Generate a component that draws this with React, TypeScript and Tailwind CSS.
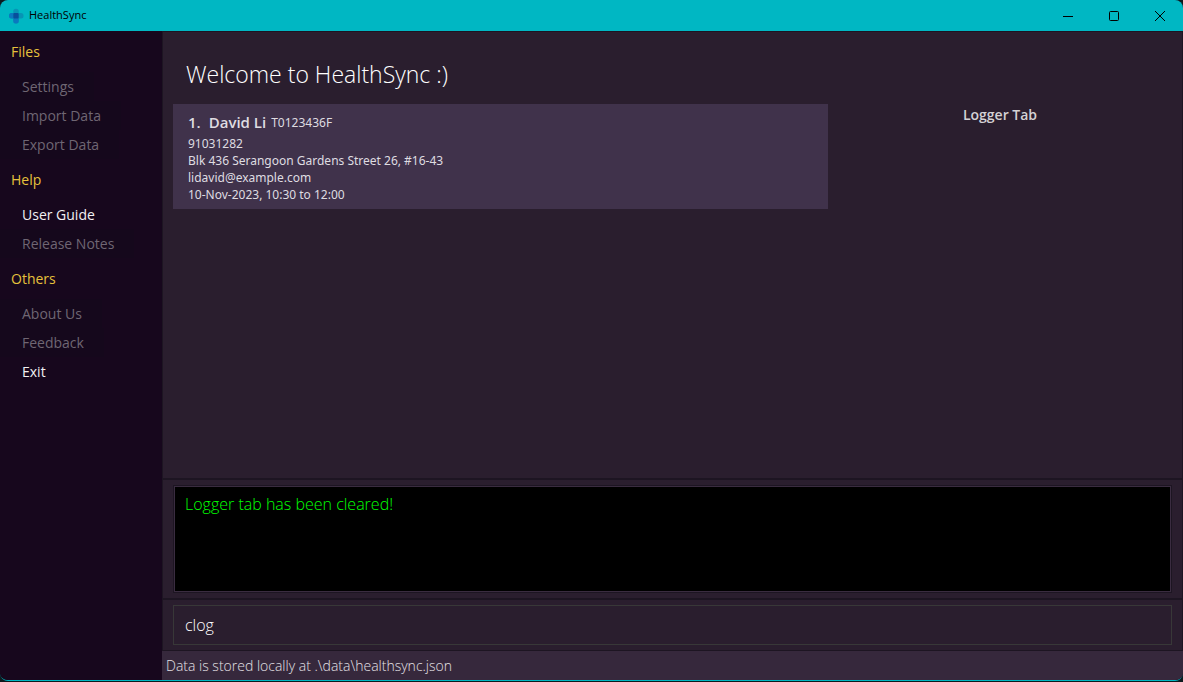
import { useState } from "react";

type MenuItem = { label: string; enabled?: boolean };
type MenuSection = { title: string; items: MenuItem[] };

const sections: MenuSection[] = [
  {
    title: "Files",
    items: [{ label: "Settings" }, { label: "Import Data" }, { label: "Export Data" }],
  },
  {
    title: "Help",
    items: [{ label: "User Guide", enabled: true }, { label: "Release Notes" }],
  },
  {
    title: "Others",
    items: [{ label: "About Us" }, { label: "Feedback" }, { label: "Exit", enabled: true }],
  },
];

function Logo() {
  return (
    <svg width="16" height="16" viewBox="0 0 16 16" aria-hidden="true">
      <rect x="1" y="5" width="14.5" height="5.5" rx="2.5" fill="#0794b5" />
      <rect x="5.3" y="0.7" width="5.4" height="14.8" rx="2.5" fill="#0794b5" />
      <path d="M3.5 5h2v5.5h-2A2.5 2.5 0 0 1 1 8V7.5A2.5 2.5 0 0 1 3.5 5z" fill="#0a78bf" />
      <path d="M5.3 10.3h5.4V13a2.5 2.5 0 0 1-2.5 2.5h-.4A2.5 2.5 0 0 1 5.3 13z" fill="#0a78bf" />
      <rect x="5.3" y="5" width="5.4" height="5.5" rx="1" fill="#084f9c" />
    </svg>
  );
}

function TitleBar() {
  return (
    <header className="flex h-[31px] shrink-0 items-center justify-between bg-[#00b7c3] pl-2 text-black">
      <div className="flex items-center gap-[5px]">
        <Logo />
        <span className="text-[11px]">HealthSync</span>
      </div>
      <div className="flex h-full">
        <button type="button" aria-label="Minimize" className="flex w-[46px] items-center justify-center">
          <svg width="10" height="10" viewBox="0 0 10 10" stroke="currentColor" fill="none">
            <path d="M0 5.5h10" />
          </svg>
        </button>
        <button type="button" aria-label="Maximize" className="flex w-[46px] items-center justify-center">
          <svg width="10" height="10" viewBox="0 0 10 10" stroke="currentColor" fill="none">
            <rect x="0.5" y="0.5" width="9" height="9" rx="1" />
          </svg>
        </button>
        <button type="button" aria-label="Close" className="flex w-[46px] items-center justify-center">
          <svg width="10" height="10" viewBox="0 0 10 10" stroke="currentColor" fill="none">
            <path d="M0 0l10 10M10 0L0 10" />
          </svg>
        </button>
      </div>
    </header>
  );
}

function Sidebar() {
  return (
    <nav className="w-[162px] shrink-0 bg-[#17071d]">
      {sections.map((section) => (
        <section key={section.title}>
          <h2 className="flex h-[41px] items-center pl-[11px] text-[14px] font-medium text-[#e6c13c]">
            {section.title}
          </h2>
          <ul>
            {section.items.map((item) => (
              <li key={item.label}>
                <button
                  type="button"
                  disabled={!item.enabled}
                  className="flex h-[29px] items-center pl-[22px] pr-5 text-[14px] text-[#f2f0f3] disabled:bg-[#15081c] disabled:text-[#6f6673]"
                >
                  {item.label}
                </button>
              </li>
            ))}
          </ul>
        </section>
      ))}
    </nav>
  );
}

function PatientCard() {
  return (
    <article className="bg-[#40324b] px-[15px] pb-[6px] pt-[7px] text-[#dfdce1]">
      <div className="flex h-[23px] items-center">
        <h2 className="flex gap-2 text-[15px] font-semibold">
          <span>1.</span>
          <span>David Li</span>
        </h2>
        <span className="ml-[5px] font-['Noto_Sans',sans-serif] text-[12px]">T0123436F</span>
      </div>
      <div className="pt-px font-['Noto_Sans',sans-serif] text-[12px] leading-[17px]">
        <p>91031282</p>
        <p>Blk 436 Serangoon Gardens Street 26, #16-43</p>
        <p>lidavid@example.com</p>
        <p>10-Nov-2023, 10:30 to 12:00</p>
      </div>
    </article>
  );
}

export default function App() {
  const [command, setCommand] = useState("clog");

  return (
    <div className="flex min-h-screen flex-col bg-[#0d1a1e] pb-px font-['Open_Sans','Noto_Sans',sans-serif]">
      <div className="flex flex-1 flex-col overflow-hidden rounded-lg border-b border-[#00b7c3] bg-[#17071d]">
        <TitleBar />
        <div className="flex flex-1">
          <Sidebar />
          <div className="flex min-w-0 flex-1 flex-col bg-[#2a1e2e]">
            <main className="flex-1 border-x border-t border-[#1d1522] px-[10px]">
              <h1 className="flex h-[72px] items-center pl-[13px] pt-3 text-[23px] font-light text-white">
                Welcome to HealthSync :)
              </h1>
              <div className="grid grid-cols-[655fr_344fr] items-start">
                <PatientCard />
                <section className="text-center">
                  <h2 className="text-[14px] font-semibold leading-[22px] text-[#d4d2d5]">Logger Tab</h2>
                </section>
              </div>
            </main>
            <section className="border-x border-t-2 border-[#1d1522] px-[10px] py-[5px]">
              <div className="border border-[#1d1522]">
                <output
                  htmlFor="command"
                  className="block h-[106px] border border-[#3a2c40] bg-black px-[10px] py-[5px] text-[16px] font-light leading-[24px] text-[#00ff00]"
                >
                  Logger tab has been cleared!
                </output>
              </div>
            </section>
            <section className="border-x border-t-2 border-[#1d1522] px-[10px] py-[5px]">
              <input
                id="command"
                type="text"
                aria-label="Command"
                value={command}
                onChange={(e) => setCommand(e.target.value)}
                className="block h-[40px] w-full border border-[#383838] bg-transparent px-[11px] text-[16px] font-light text-white outline-none"
              />
            </section>
            <footer className="flex h-[30px] items-center border-t border-[#1d1522] bg-[#36283c] px-1 text-[14px] font-light text-[#e4e1e6]">
              Data is stored locally at .\data\healthsync.json
            </footer>
          </div>
        </div>
      </div>
    </div>
  );
}
